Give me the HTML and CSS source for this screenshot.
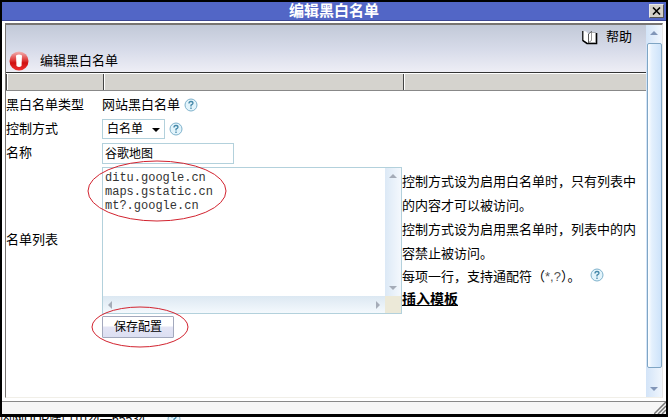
FILE: index.html
```
<!DOCTYPE html>
<html lang="zh-CN">
<head>
    <meta charset="UTF-8">
    <meta name="viewport" content="width=device-width, initial-scale=1.0">
    <title>编辑黑白名单</title>
    <link rel="stylesheet" href="styles.css">
</head>
<body>
    <div class="dialog">
        <!-- Title bar -->
        <div class="title-bar">
            <h1>编辑黑白名单</h1>
            <button type="button" class="close-button" aria-label="关闭">
                <svg width="9" height="8" viewBox="0 0 9 8"><path d="M1 0.5L8 7.5M8 0.5L1 7.5" stroke="#000" stroke-width="1.600"/></svg>
            </button>
        </div>

        <div class="frame">
            <div class="content">
                <div class="page-header">
                    <a href="#" class="help-link">
                        <svg width="16" height="15" viewBox="0 0 16 15">
                            <path d="M1 1V10.500L5 13.500H14.500V3" fill="none" stroke="#000" stroke-width="1.600"/>
                            <path d="M1.500 1L4 1.500L6.500 4V13L4 11.500L1.500 10Z" fill="#fff"/>
                            <path d="M6.500 13V4L9.500 1.500V10.500Z" fill="#fff" stroke="#333" stroke-width="0.800"/>
                            <path d="M9.500 2.500H13.500V12.500H7L9.500 10.500Z" fill="#fff" stroke="#888" stroke-width="0.600"/>
                        </svg>
                        <span>帮助</span>
                    </a>
                    <div class="page-title">
                        <svg width="20" height="20" viewBox="0 0 20 20">
                            <defs>
                                <linearGradient id="redBall" x1="0" y1="0" x2="0" y2="1">
                                    <stop offset="0" stop-color="#f2b4b4"/>
                                    <stop offset="0.45" stop-color="#df3a3a"/>
                                    <stop offset="0.6" stop-color="#cf1010"/>
                                    <stop offset="1" stop-color="#ef3030"/>
                                </linearGradient>
                            </defs>
                            <circle cx="10" cy="10" r="9.500" fill="url(#redBall)"/>
                            <path d="M7 4.500Q10 2.500 13 4.500L12.500 15Q10 17 7.500 15Z" fill="#fff"/>
                        </svg>
                        <h2>编辑黑白名单</h2>
                    </div>
                </div>

                <div class="columns-bar">
                    <span></span>
                    <span></span>
                    <span></span>
                </div>

                <form class="list-form">
                    <span class="label">黑白名单类型</span>
                    <div class="field">
                        <span>网站黑白名单</span>
                        <svg class="hint" width="14" height="14" viewBox="0 0 14 14"><circle cx="7" cy="7" r="6" fill="#e3f4fb" stroke="#7fb2cc"/><path d="M5 5.500Q5 3.500 7 3.500T9 5.300Q9 6.300 7 7.200V8.500M7 9.500V11" fill="none" stroke="#4487a8" stroke-width="1.300"/></svg>
                    </div>

                    <label class="label" for="mode">控制方式</label>
                    <div class="field">
                        <span class="select-box">
                            <select id="mode">
                                <option>白名单</option>
                                <option>黑名单</option>
                            </select>
                        </span>
                        <svg class="hint" width="14" height="14" viewBox="0 0 14 14"><circle cx="7" cy="7" r="6" fill="#e3f4fb" stroke="#7fb2cc"/><path d="M5 5.500Q5 3.500 7 3.500T9 5.300Q9 6.300 7 7.200V8.500M7 9.500V11" fill="none" stroke="#4487a8" stroke-width="1.300"/></svg>
                    </div>

                    <label class="label" for="name">名称</label>
                    <div class="field">
                        <input type="text" id="name" value="谷歌地图">
                    </div>

                    <label class="label" for="list">名单列表</label>
                    <div class="list-row">
                        <div class="list-box">
                            <textarea id="list" spellcheck="false" wrap="off">ditu.google.cn
maps.gstatic.cn
mt?.google.cn</textarea>
                            <div class="scroll-v"><i class="arrow up"></i><i class="arrow down"></i></div>
                            <div class="scroll-h"><i class="arrow left"></i><i class="arrow right"></i></div>
                            <div class="scroll-corner"></div>
                            <svg class="mark mark-list" width="140" height="62" viewBox="0 0 140 62"><ellipse cx="70" cy="31" rx="69" ry="30" fill="none" stroke="#d2232f"/></svg>
                        </div>
                        <div class="notes">
                            <p>控制方式设为启用白名单时，只有列表中的内容才可以被访问。</p>
                            <p>控制方式设为启用黑名单时，列表中的内容禁止被访问。</p>
                            <p class="tight">每项一行，支持通配符（<span class="wild">*,?</span>）。
                                <svg class="hint" width="14" height="14" viewBox="0 0 14 14"><circle cx="7" cy="7" r="6" fill="#e3f4fb" stroke="#7fb2cc"/><path d="M5 5.500Q5 3.500 7 3.500T9 5.300Q9 6.300 7 7.200V8.500M7 9.500V11" fill="none" stroke="#4487a8" stroke-width="1.300"/></svg>
                            </p>
                            <p class="tight"><a href="#" class="template-link">插入模板</a></p>
                        </div>
                    </div>

                    <div class="actions">
                        <button type="button" class="save-button">保存配置</button>
                        <svg class="mark mark-save" width="98" height="42" viewBox="0 0 98 42"><ellipse cx="49" cy="21" rx="48" ry="20" fill="none" stroke="#d2232f"/></svg>
                    </div>
                </form>
            </div>

            <!-- Window scrollbar -->
            <div class="page-scroll">
                <i class="arrow up"></i>
                <div class="thumb"></div>
                <i class="arrow down"></i>
            </div>
        </div>

        <div class="status-bar">
            <svg width="12" height="12" viewBox="0 0 12 12"><path d="M0 12L12 0M4 12L12 4M8 12L12 8" stroke="#777" stroke-width="1.500"/></svg>
        </div>
    </div>

    <!-- Page under the dialog -->
    <div class="under-page">
        <span>内网UDP端口1024—65534</span>
        <svg class="hint" width="14" height="14" viewBox="0 0 14 14"><circle cx="7" cy="7" r="6" fill="#e3f4fb" stroke="#7fb2cc"/><path d="M5 5.500Q5 3.500 7 3.500T9 5.300Q9 6.300 7 7.200V8.500M7 9.500V11" fill="none" stroke="#4487a8" stroke-width="1.300"/></svg>
    </div>
</body>
</html>
```
FILE: styles.css
```
* {
    margin: 0;
    padding: 0;
    box-sizing: border-box;
}

body {
    display: flex;
    flex-direction: column;
    height: 100vh;
    overflow: hidden;
    background: #fff;
    color: #000;
    font-family: "Liberation Sans", "Noto Sans CJK SC", sans-serif;
    font-size: 13px;
    line-height: 24px;
}

button, input, select {
    font-family: inherit;
    font-size: 12px;
    color: #000;
}

svg {
    flex: none;
}

.dialog {
    flex: 1;
    min-height: 0;
    display: flex;
    flex-direction: column;
    border: 2px solid #000;
    border-bottom-width: 3px;
    background: #fff;
}

.title-bar {
    display: flex;
    align-items: center;
    height: 19px;
    padding-right: 2px;
    background: #5266c6;
    border-bottom: 1px solid #3c4894;
}

.title-bar h1 {
    flex: 1;
    padding-left: 17px;
    text-align: center;
    color: #fff;
    font-size: 15px;
    line-height: 18px;
}

.close-button {
    display: flex;
    align-items: center;
    justify-content: center;
    width: 15px;
    height: 14px;
    background: #d4d0c8;
    border: 1px solid #e8e8e8;
    border-right-color: #555;
    border-bottom-color: #555;
}

.frame {
    flex: 1;
    min-height: 0;
    display: flex;
    margin: 2px 3px 3px;
    border-top: 2px solid #777472;
    border-left: 1px solid #777472;
    border-right: 1px solid #e6e6e6;
    border-bottom: 1px solid #f1efe8;
}

.content {
    flex: 1;
    min-width: 0;
}

.page-header {
    display: flex;
    flex-direction: column;
    justify-content: space-between;
    height: 48px;
    padding: 0 14px 1px 3px;
    background: linear-gradient(#c2c9d8, #d8dcea 55%, #eeeef5);
    border-bottom: 1px solid #333;
}

.help-link {
    display: flex;
    align-items: center;
    align-self: flex-end;
    gap: 8px;
    color: #000;
    line-height: 24px;
    text-decoration: none;
}

.page-title {
    display: flex;
    align-items: center;
    gap: 11px;
}

.page-title h2 {
    font-size: 13px;
    font-weight: normal;
    line-height: 20px;
}

.columns-bar {
    display: grid;
    grid-template-columns: 97px 300px 1fr;
    height: 18px;
    background: #d5d3ce;
    border-top: 1px solid #fff;
    border-bottom: 1px solid #888;
}

.columns-bar span {
    border-left: 1px solid #444;
    box-shadow: inset 1px 0 #fff;
}

.list-form {
    display: grid;
    grid-template-columns: 96px 1fr;
    padding-top: 2px;
}

.label {
    align-self: center;
}

.field {
    display: flex;
    align-items: center;
    gap: 4px;
    height: 24px;
}

.select-box {
    position: relative;
    display: flex;
}

.select-box::after {
    content: "";
    position: absolute;
    right: 5px;
    top: 9px;
    border: 4px solid transparent;
    border-top-color: #000;
    border-bottom: 0;
    pointer-events: none;
}

select {
    appearance: none;
    width: 63px;
    height: 20px;
    padding-left: 4px;
    background: #fff;
    border: 1px solid #b3d1dc;
    border-radius: 0;
}

input {
    width: 132px;
    height: 21px;
    padding: 0 2px 2px;
    border: 1px solid #b3d1dc;
}

.list-row {
    display: flex;
    padding-top: 2px;
}

.list-box {
    position: relative;
    flex: none;
    display: grid;
    grid-template-columns: 1fr 16px;
    grid-template-rows: 1fr 17px;
    width: 300px;
    height: 147px;
    border: 1px solid #b3d1dc;
}

textarea {
    border: 0;
    padding: 3px 2px;
    outline: none;
    resize: none;
    overflow: hidden;
    color: #333;
    font-family: "Liberation Mono", monospace;
    font-size: 12px;
    line-height: 14px;
}

.scroll-v, .page-scroll {
    display: flex;
    flex-direction: column;
    align-items: center;
    justify-content: space-between;
    padding: 6px 0;
    background: linear-gradient(to right, #dce9f6, #f4f8fd);
}

.scroll-h {
    display: flex;
    align-items: center;
    justify-content: space-between;
    padding: 0 5px;
    background: linear-gradient(#dce8f2, #f4f9fd);
}

.scroll-corner {
    background: #ece9d8;
}

.arrow {
    border: 4px solid transparent;
}

.up {
    border-top: 0;
    border-bottom-color: #a5acb8;
}

.down {
    border-bottom: 0;
    border-top-color: #a5acb8;
}

.left {
    border-left: 0;
    border-right-color: #a5acb8;
}

.right {
    border-right: 0;
    border-left-color: #a5acb8;
}

.notes {
    flex: 1;
    padding: 3px 7px 0 0;
}

.notes .tight {
    line-height: 22px;
}

.notes .hint {
    margin-left: 6px;
    vertical-align: -1px;
}

.wild {
    color: #555;
}

.template-link {
    color: #000;
    font-weight: bold;
    font-size: 14px;
}

.actions {
    position: relative;
    grid-column: 2;
    display: flex;
    padding-top: 2px;
}

.save-button {
    width: 72px;
    height: 22px;
    padding-bottom: 4px;
    background: linear-gradient(#fff 45%, #e4e5f5 50%, #dcdff2);
    border: 1px solid #a3a9bd;
    border-radius: 1px;
}

/* Red pen circles over the form */
.mark {
    position: absolute;
    pointer-events: none;
}

.mark-list {
    left: -16px;
    top: -8px;
}

.mark-save {
    left: -11px;
    top: -8px;
}

.page-scroll {
    width: 16px;
    background: linear-gradient(to right, #d3e4f8, #f0f6fd);
}

.page-scroll .up {
    border-bottom-color: #8296b8;
}

.page-scroll .down {
    border-top-color: #8296b8;
}

.thumb {
    flex: 1;
    width: 15px;
    margin: 8px 0 19px;
    background: linear-gradient(to right, #fff, #e3f0fd 30%, #cde3fa);
    border: 1px solid #7fa5c4;
    border-radius: 2px;
}

.status-bar {
    display: flex;
    align-items: flex-end;
    justify-content: flex-end;
    height: 13px;
    background: #f6f6f6;
    border-top: 1px solid #888;
}

.under-page {
    display: flex;
    align-items: center;
    gap: 22px;
    height: 3px;
    overflow: hidden;
    font-size: 12px;
    line-height: 14px;
}
```
